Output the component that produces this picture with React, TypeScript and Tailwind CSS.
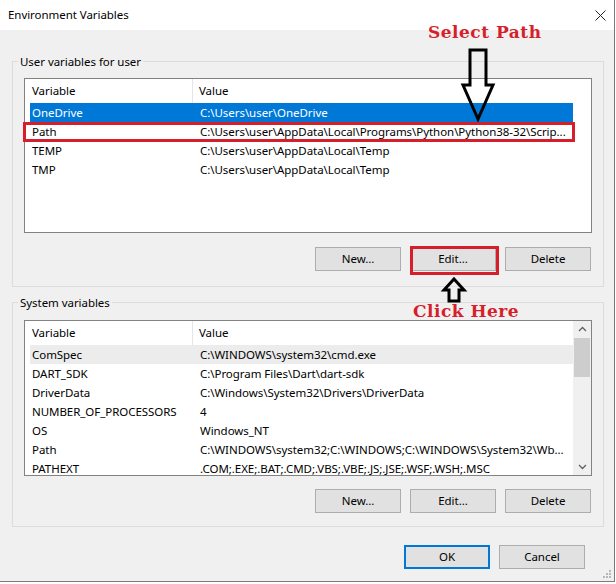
import React from "react";

type Row = { name: string; value: string; state?: "active" | "soft" };

const userRows: Row[] = [
  { name: "OneDrive", value: "C:\\Users\\user\\OneDrive", state: "active" },
  { name: "Path", value: "C:\\Users\\user\\AppData\\Local\\Programs\\Python\\Python38-32\\Scrip..." },
  { name: "TEMP", value: "C:\\Users\\user\\AppData\\Local\\Temp" },
  { name: "TMP", value: "C:\\Users\\user\\AppData\\Local\\Temp" },
];

const systemRows: Row[] = [
  { name: "ComSpec", value: "C:\\WINDOWS\\system32\\cmd.exe", state: "soft" },
  { name: "DART_SDK", value: "C:\\Program Files\\Dart\\dart-sdk" },
  { name: "DriverData", value: "C:\\Windows\\System32\\Drivers\\DriverData" },
  { name: "NUMBER_OF_PROCESSORS", value: "4" },
  { name: "OS", value: "Windows_NT" },
  { name: "Path", value: "C:\\WINDOWS\\system32;C:\\WINDOWS;C:\\WINDOWS\\System32\\Wb..." },
  { name: "PATHEXT", value: ".COM;.EXE;.BAT;.CMD;.VBS;.VBE;.JS;.JSE;.WSF;.WSH;.MSC" },
];

function Button({ label, primary }: { label: string; primary?: boolean }) {
  return (
    <div
      className={
        "w-[86px] h-[24px] flex items-center justify-center bg-[#e1e1e1] text-black " +
        (primary ? "border-2 border-[#0078d7]" : "border border-[#adadad]")
      }
    >
      {label}
    </div>
  );
}

function ScrollBar() {
  return (
    <div className="w-[18px] h-full bg-[#f0f0f0] flex flex-col items-center">
      <svg width="17" height="17" viewBox="0 0 17 17" className="shrink-0">
        <path d="M5 10 L8.5 6.5 L12 10" fill="none" stroke="#606060" strokeWidth="1.3" />
      </svg>
      <div className="w-[16px] h-[39px] bg-[#cdcdcd]" />
      <div className="flex-1" />
      <svg width="17" height="17" viewBox="0 0 17 17" className="shrink-0">
        <path d="M5 7 L8.5 10.5 L12 7" fill="none" stroke="#606060" strokeWidth="1.3" />
      </svg>
    </div>
  );
}

function VarList({ rows, height, scroll }: { rows: Row[]; height: string; scroll?: boolean }) {
  return (
    <div className={"w-full bg-white border border-[#828282] flex overflow-hidden " + height}>
      <div className="flex-1 flex flex-col pl-[5px] overflow-hidden">
        <div className="h-[24px] flex shrink-0">
          <div className="w-[163px] border-r border-[#e5e5e5] flex items-center pl-[2px]">Variable</div>
          <div className="flex items-center pl-[6px]">Value</div>
        </div>
        {rows.map((r) => (
          <div
            key={r.name}
            className={
              "h-[19px] shrink-0 flex items-center whitespace-nowrap " +
              (r.state === "active"
                ? "bg-[#0078d7] text-white"
                : r.state === "soft"
                ? "bg-[#ececec]"
                : "")
            }
          >
            <div className="w-[170px] pl-[2px] shrink-0">{r.name}</div>
            <div>{r.value}</div>
          </div>
        ))}
      </div>
      {scroll ? <ScrollBar /> : <div className="w-[18px]" />}
    </div>
  );
}

function Group({ title, children, className }: { title: string; children: React.ReactNode; className?: string }) {
  return (
    <div className={"w-[592px] ml-[12px] border border-[#dcdcdc] flex flex-col px-[11px] " + (className || "")}>
      <div className="-mt-[9px] h-[17px] leading-[17px] self-start -ml-[6px] px-[2px] bg-[#f0f0f0]">{title}</div>
      {children}
    </div>
  );
}

export default function App() {
  return (
    <div
      className="relative w-[616px] h-[584px] bg-white text-[11.5px] tracking-[-0.05px] text-black"
      style={{ fontFamily: "'Noto Sans', 'Open Sans', sans-serif" }}
    >
      <div className="w-[615px] h-[582px] border-r border-b border-[#7a7a7a] flex flex-col">
        <div className="h-[30px] bg-white flex items-center justify-between pl-[8px] pr-[8px] shrink-0">
          <span>Environment Variables</span>
          <svg width="11" height="11" viewBox="0 0 11 11">
            <path d="M0.5 0.5 L10.5 10.5 M10.5 0.5 L0.5 10.5" stroke="#222" strokeWidth="1" />
          </svg>
        </div>

        <div className="flex-1 bg-[#f0f0f0] flex flex-col pt-[31px]">
          <Group title="User variables for user" className="pb-[15px]">
            <div className="mt-[8px]">
              <VarList rows={userRows} height="h-[155px]" />
            </div>
            <div className="mt-[14px] flex justify-end gap-[9px] pr-[1px]">
              <Button label="New..." />
              <Button label="Edit..." />
              <Button label="Delete" />
            </div>
          </Group>

          <Group title="System variables" className="mt-[15px] pb-[13px]">
            <div className="mt-[9px]">
              <VarList rows={systemRows} height="h-[156px]" scroll />
            </div>
            <div className="mt-[13px] flex justify-end gap-[9px] pr-[1px]">
              <Button label="New..." />
              <Button label="Edit..." />
              <Button label="Delete" />
            </div>
          </Group>

          <div className="mt-[18px] flex justify-end gap-[9px] pr-[29px]">
            <Button label="OK" primary />
            <Button label="Cancel" />
          </div>

          <div className="flex-1 flex justify-end items-end pr-[2px] pb-[2px]">
            <svg width="10" height="10" viewBox="0 0 10 10">
              <rect x="7" y="1" width="2" height="2" fill="#b8b8b8" />
              <rect x="4" y="4" width="2" height="2" fill="#b8b8b8" />
              <rect x="7" y="4" width="2" height="2" fill="#b8b8b8" />
              <rect x="1" y="7" width="2" height="2" fill="#b8b8b8" />
              <rect x="4" y="7" width="2" height="2" fill="#b8b8b8" />
              <rect x="7" y="7" width="2" height="2" fill="#b8b8b8" />
            </svg>
          </div>
        </div>
      </div>

      {/* annotations */}
      <div
        className="absolute left-[428px] top-[24px] text-[17px] tracking-[0.5px] leading-none font-bold text-[#d71f2b] whitespace-nowrap"
        style={{ fontFamily: "'DejaVu Serif', serif" }}
      >
        Select Path
      </div>
      <svg className="absolute left-[458px] top-[46px]" width="40" height="78" viewBox="0 0 40 78">
        <polygon points="12,4 28,4 28,39 35,39 20,73 5,39 12,39" fill="none" stroke="#000" strokeWidth="3" />
      </svg>
      <div className="absolute left-[23px] top-[122px] w-[552px] h-[20px] border-[3px] border-[#d71f2b]" />

      <div className="absolute left-[410px] top-[246px] w-[89px] h-[29px] border-[3px] border-[#d71f2b]" />
      <svg className="absolute left-[440px] top-[275px]" width="28" height="30" viewBox="0 0 28 30">
        <polygon points="14,4 24,15 19,15 19,26 9,26 9,15 4,15" fill="none" stroke="#000" strokeWidth="3" />
      </svg>
      <div
        className="absolute left-[413px] top-[303px] text-[17px] tracking-[0.5px] leading-none font-bold text-[#d71f2b] whitespace-nowrap"
        style={{ fontFamily: "'DejaVu Serif', serif" }}
      >
        Click Here
      </div>
    </div>
  );
}
